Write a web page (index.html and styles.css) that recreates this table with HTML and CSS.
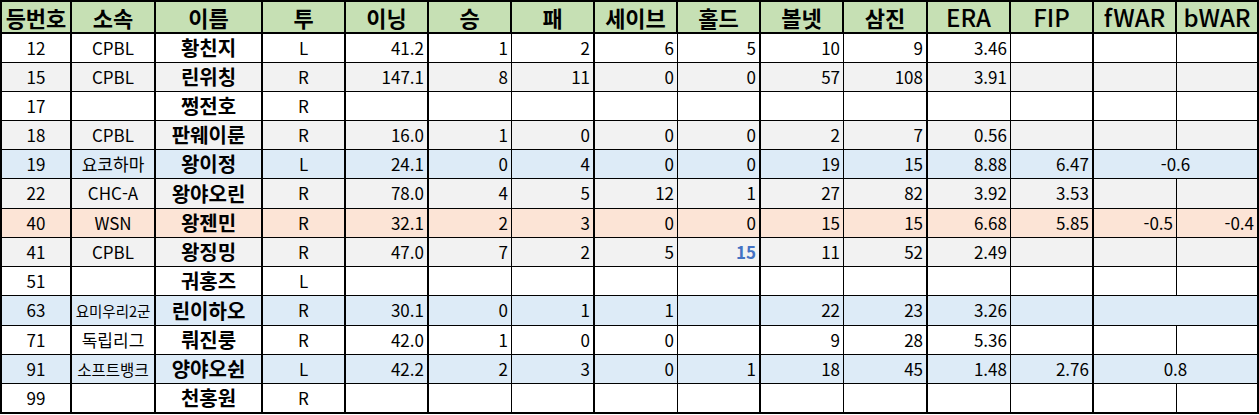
FILE: index.html
```html
<!DOCTYPE html>
<html lang="ko">
<head>
<meta charset="utf-8">
<title>투수 기록</title>
<link rel="stylesheet" href="styles.css">
</head>
<body>
<div class="sheet">
  <div class="row head">
    <div>등번호</div><div>소속</div><div>이름</div><div>투</div><div>이닝</div><div>승</div><div>패</div><div>세이브</div><div>홀드</div><div>볼넷</div><div>삼진</div><div class="lat">ERA</div><div class="lat">FIP</div><div class="lat">fWAR</div><div class="lat">bWAR</div>
  </div>
  <div class="row">
    <div>12</div><div>CPBL</div><div>황친지</div><div>L</div><div>41.2</div><div>1</div><div>2</div><div>6</div><div>5</div><div>10</div><div>9</div><div>3.46</div><div></div><div></div><div></div>
  </div>
  <div class="row grey">
    <div>15</div><div>CPBL</div><div>린위칭</div><div>R</div><div>147.1</div><div>8</div><div>11</div><div>0</div><div>0</div><div>57</div><div>108</div><div>3.91</div><div></div><div></div><div></div>
  </div>
  <div class="row">
    <div>17</div><div></div><div>쩡전호</div><div>R</div><div></div><div></div><div></div><div></div><div></div><div></div><div></div><div></div><div></div><div></div><div></div>
  </div>
  <div class="row grey">
    <div>18</div><div>CPBL</div><div>판웨이룬</div><div>R</div><div>16.0</div><div>1</div><div>0</div><div>0</div><div>0</div><div>2</div><div>7</div><div>0.56</div><div></div><div></div><div></div>
  </div>
  <div class="row blue">
    <div>19</div><div class="ko">요코하마</div><div>왕이정</div><div>L</div><div>24.1</div><div>0</div><div>4</div><div>0</div><div>0</div><div>19</div><div>15</div><div>8.88</div><div>6.47</div><div class="span2">-0.6</div>
  </div>
  <div class="row grey tall">
    <div>22</div><div>CHC-A</div><div>왕야오린</div><div>R</div><div>78.0</div><div>4</div><div>5</div><div>12</div><div>1</div><div>27</div><div>82</div><div>3.92</div><div>3.53</div><div></div><div></div>
  </div>
  <div class="row peach">
    <div>40</div><div>WSN</div><div>왕젠민</div><div>R</div><div>32.1</div><div>2</div><div>3</div><div>0</div><div>0</div><div>15</div><div>15</div><div>6.68</div><div>5.85</div><div>-0.5</div><div>-0.4</div>
  </div>
  <div class="row grey">
    <div>41</div><div>CPBL</div><div>왕징밍</div><div>R</div><div>47.0</div><div>7</div><div>2</div><div>5</div><div class="hl">15</div><div>11</div><div>52</div><div>2.49</div><div></div><div></div><div></div>
  </div>
  <div class="row">
    <div>51</div><div></div><div>궈홍즈</div><div>L</div><div></div><div></div><div></div><div></div><div></div><div></div><div></div><div></div><div></div><div></div><div></div>
  </div>
  <div class="row blue tall">
    <div>63</div><div class="ko small">요미우리2군</div><div>린이하오</div><div>R</div><div>30.1</div><div>0</div><div>1</div><div>1</div><div></div><div>22</div><div>23</div><div>3.26</div><div></div><div class="span2"></div>
  </div>
  <div class="row">
    <div>71</div><div class="ko">독립리그</div><div>뤄진룽</div><div>R</div><div>42.0</div><div>1</div><div>0</div><div>0</div><div></div><div>9</div><div>28</div><div>5.36</div><div></div><div></div><div></div>
  </div>
  <div class="row blue">
    <div>91</div><div class="ko mid">소프트뱅크</div><div>양야오쉰</div><div>L</div><div>42.2</div><div>2</div><div>3</div><div>0</div><div>1</div><div>18</div><div>45</div><div>1.48</div><div>2.76</div><div class="span2">0.8</div>
  </div>
  <div class="row last">
    <div>99</div><div></div><div>천홍원</div><div>R</div><div></div><div></div><div></div><div></div><div></div><div></div><div></div><div></div><div></div><div></div><div></div>
  </div>
</div>
</body>
</html>
```

FILE: styles.css
```css
html, body {
  margin: 0;
  padding: 0;
  background: #ffffff;
}

body {
  font-family: "Noto Sans CJK KR", "Noto Sans", sans-serif;
  color: #000;
}

.sheet {
  width: 1259px;
  box-sizing: border-box;
  border: 2px solid #000;
  background: #fff;
}

.row {
  display: grid;
  grid-template-columns: 70px 84px 107px 83px 83px 83px 83px 83px 83px 83px 84px 83px 83px 83px 80px;
  height: 29px;
  box-sizing: border-box;
  border-bottom: 1px solid #000;
}

.row.tall {
  height: 30px;
}

.row.last {
  height: 28px;
  border-bottom: none;
}

.row > div {
  box-sizing: border-box;
  display: flex;
  align-items: center;
  justify-content: flex-end;
  padding-right: 3px;
  border-right: 1px solid #000;
  font-size: 17px;
  line-height: 1.2;
  white-space: nowrap;
}

.row > div:nth-child(-n+5),
.row > div:nth-child(7),
.row > div:nth-child(9),
.row > div:nth-child(11),
.row > div:nth-child(13) {
  border-right-width: 2px;
}

.row > div:nth-child(-n+4) {
  justify-content: center;
  padding-right: 0;
}

.row > div:nth-child(3) {
  font-weight: 700;
  font-size: 20px;
}

.row > div:last-child {
  border-right: none;
}

.row > div.span2 {
  grid-column: span 2;
  justify-content: center;
  padding-right: 0;
}

.row > div.ko {
  font-size: 17px;
}

.row > div.ko.small {
  font-size: 14.5px;
}

.row > div.ko.mid {
  font-size: 15.5px;
}

.row > div.hl {
  color: #4472c4;
  font-weight: 700;
}

.grey { background: #f2f2f2; }
.blue { background: #ddebf7; }
.peach { background: #fce4d6; }

.row.head {
  height: 32px;
  border-bottom: 2px solid #000;
  background: #c6e0b4;
}

.row.head > div {
  justify-content: center;
  padding-right: 0;
  border-right-width: 2px;
  font-weight: 700;
  font-size: 22px;
}

.row.head > div:last-child {
  border-right: none;
}

.row.head > div.lat {
  font-weight: 500;
  font-size: 24px;
}
```
